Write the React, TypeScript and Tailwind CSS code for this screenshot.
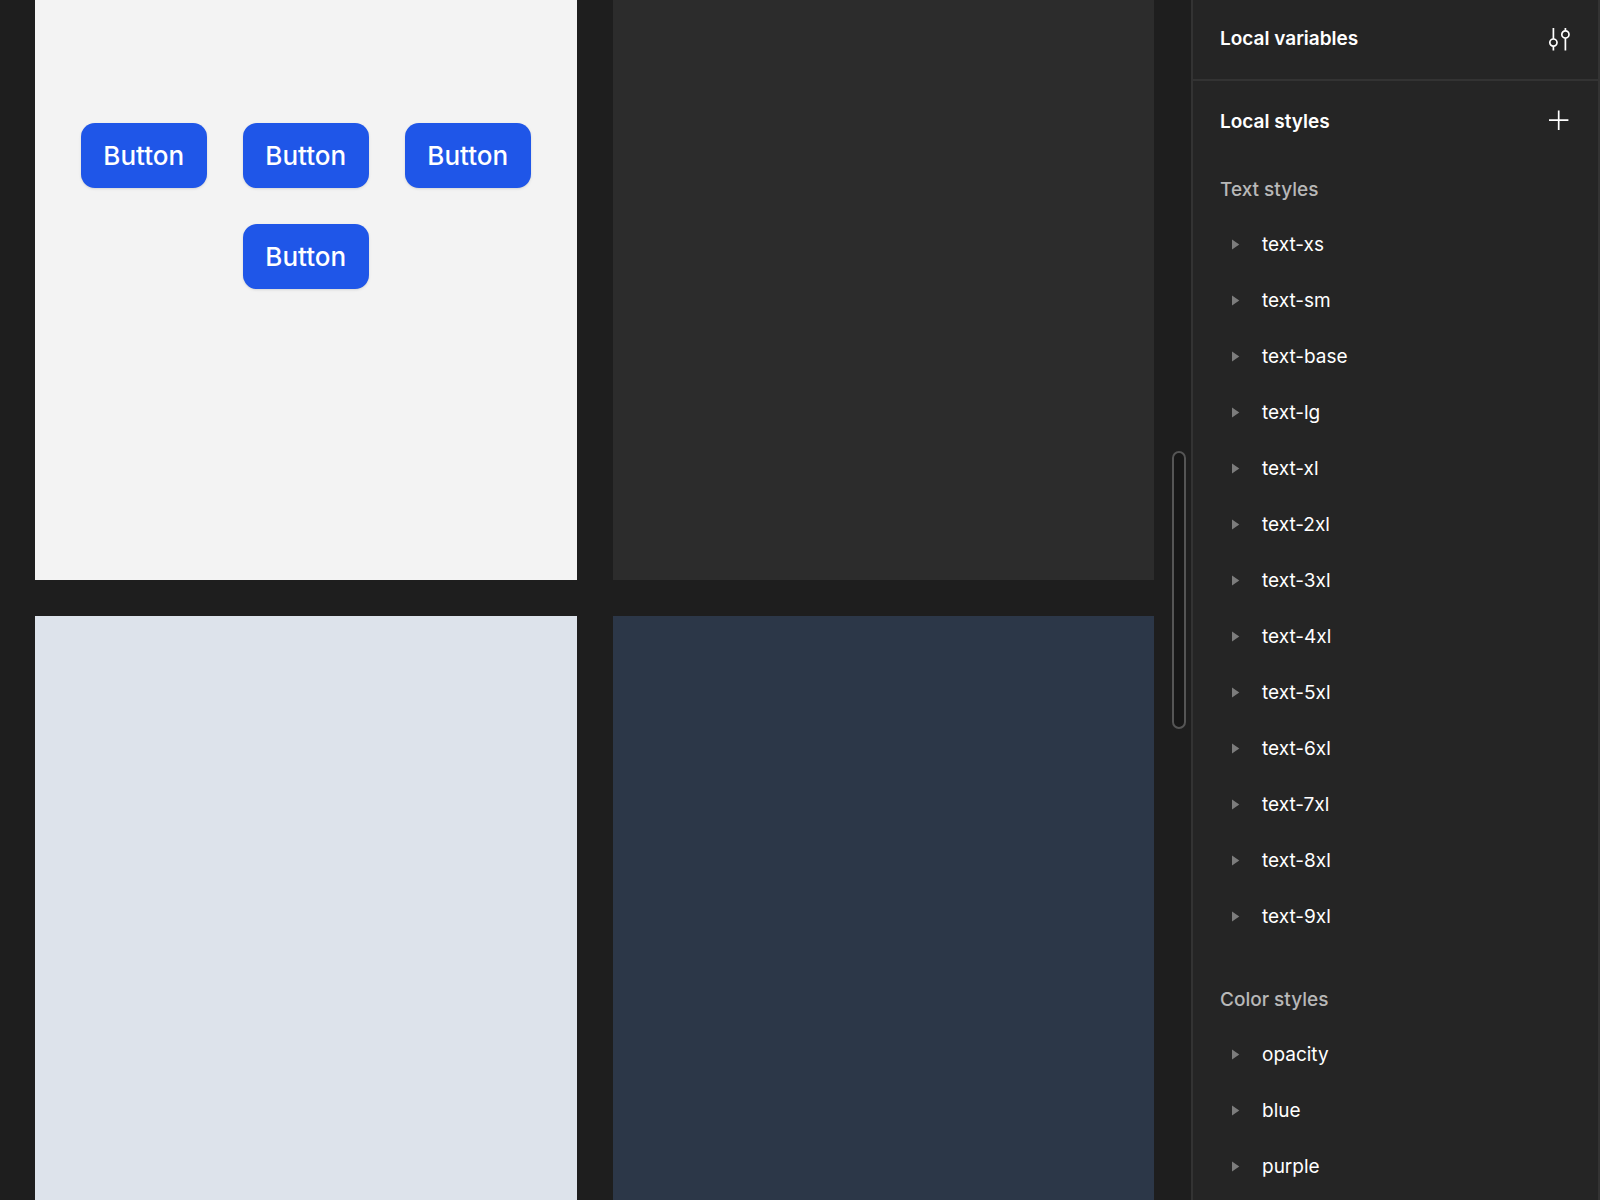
import { useState } from "react"

const textStyles = [
    "text-xs",
    "text-sm",
    "text-base",
    "text-lg",
    "text-xl",
    "text-2xl",
    "text-3xl",
    "text-4xl",
    "text-5xl",
    "text-6xl",
    "text-7xl",
    "text-8xl",
    "text-9xl",
]

const colorStyles = ["opacity", "blue", "purple"]

const buttons = ["Button", "Button", "Button", "Button"]

function VariablesIcon() {
    return (
        <svg className="h-6 w-6" viewBox="0 0 24 24" fill="none" stroke="currentColor" strokeWidth="1.7" aria-hidden="true">
            <path d="M6.4 0v11M6.4 18.2V22.5M18.4 0v2.8M18.4 10v12.5" />
            <circle cx="6.4" cy="14.6" r="3.6" />
            <circle cx="18.4" cy="6.4" r="3.6" />
        </svg>
    )
}

function PlusIcon() {
    return (
        <svg className="h-6 w-6" viewBox="0 0 24 24" fill="none" stroke="currentColor" strokeWidth="1.7" aria-hidden="true">
            <path d="M11.7 0.5v19.5M2 10.2h19.4" />
        </svg>
    )
}

function CanvasButton({ label }: { label: string }) {
    return (
        <button type="button" className="h-[65px] w-[126px] rounded-[14px] bg-[#1f56e8] text-[26px] font-medium text-white shadow-sm">
            {label}
        </button>
    )
}

function StyleRow({ name }: { name: string }) {
    const [open, setOpen] = useState(false)

    return (
        <li>
            <button
                type="button"
                aria-expanded={open}
                onClick={() => setOpen(!open)}
                className="flex h-14 w-full items-center gap-[22px] pl-[39px] text-left text-[19px] text-white"
            >
                <svg className={open ? "h-3 w-2 rotate-90" : "h-3 w-2"} viewBox="0 0 8 12" fill="#7c7c7c" aria-hidden="true">
                    <path d="M0 0.6L7.3 5.6L0 10.6z" />
                </svg>
                <span>{name}</span>
            </button>
        </li>
    )
}

function StyleGroup({ title, items }: { title: string, items: string[] }) {
    return (
        <section>
            <h3 className="flex h-[54px] items-center px-[27px] text-[19px] font-medium text-[#b8b8b8]">{title}</h3>
            <ul>
                {items.map((item) => (
                    <StyleRow key={item} name={item} />
                ))}
            </ul>
        </section>
    )
}

export default function App() {
    return (
        <div className="flex h-screen w-full overflow-hidden bg-[#1e1e1e] font-['Inter',sans-serif]">
            <main className="flex min-w-0 flex-1 pl-[35px] pr-[5px]">
                <div className="grid flex-1 grid-cols-2 grid-rows-[580px_1fr] gap-9">
                    <div className="flex flex-wrap content-start justify-center gap-9 bg-[#f3f3f3] pt-[123px]">
                        {buttons.map((label, i) => (
                            <CanvasButton key={i} label={label} />
                        ))}
                    </div>
                    <div className="bg-[#2c2c2c]"></div>
                    <div className="bg-[#dde3eb]"></div>
                    <div className="bg-[#2c3748]"></div>
                </div>
                <div className="ml-[18px] mt-[451px] h-[278px] w-[14px] rounded-full border-2 border-[#555555] bg-[#171717]"></div>
            </main>
            <aside className="w-[409px] shrink-0 border-x-2 border-[#333333] bg-[#252525]">
                <div className="flex h-[81px] items-center justify-between border-b-2 border-[#333333] px-[27px] text-white">
                    <h2 className="text-[19px] font-semibold">Local variables</h2>
                    <button type="button" aria-label="Open variables">
                        <VariablesIcon />
                    </button>
                </div>
                <div className="flex h-[82px] items-center justify-between px-[27px] text-white">
                    <h2 className="text-[19px] font-semibold">Local styles</h2>
                    <button type="button" aria-label="Create style">
                        <PlusIcon />
                    </button>
                </div>
                <div className="flex flex-col gap-7">
                    <StyleGroup title="Text styles" items={textStyles} />
                    <StyleGroup title="Color styles" items={colorStyles} />
                </div>
            </aside>
        </div>
    )
}
